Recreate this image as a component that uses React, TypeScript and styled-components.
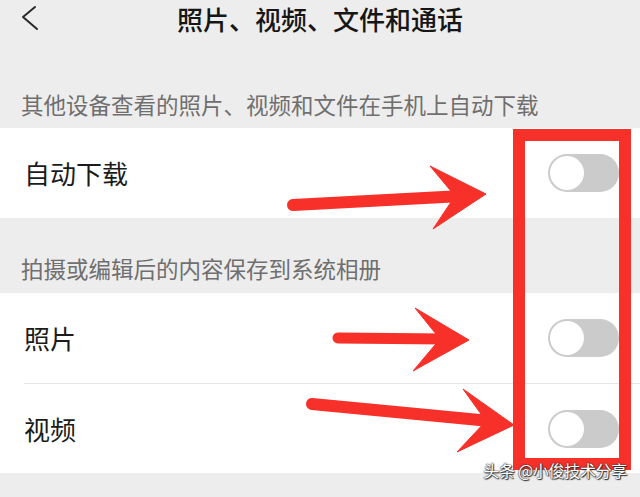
import React from "react";
import styled, { createGlobalStyle } from "styled-components";

const GlobalStyle = createGlobalStyle`
  html, body {
    margin: 0;
    padding: 0;
    background: #ededed;
  }
  body {
    font-family: "Noto Sans CJK SC", "Noto Sans", sans-serif;
  }
`;

const Page = styled.div`
  position: relative;
  width: 640px;
  height: 497px;
  overflow: hidden;
  background: #ededed;
  display: flex;
  flex-direction: column;
`;

const NavBar = styled.div`
  height: 45px;
  display: grid;
  grid-template-columns: 60px 1fr 60px;
  align-items: center;
`;

const BackButton = styled.div`
  display: flex;
  align-items: flex-start;
  padding: 5px 0 0 20px;
  height: 45px;
  box-sizing: border-box;
`;

const Title = styled.h1`
  margin: 0;
  text-align: center;
  font-size: 26px;
  line-height: 1;
  font-weight: 500;
  color: #161616;
  margin-top: -7px;
`;

const SectionLabel = styled.div<{ $height: number; $bottom: number }>`
  height: ${(p) => p.$height}px;
  box-sizing: border-box;
  display: flex;
  align-items: flex-end;
  padding: 0 21px ${(p) => p.$bottom}px;
  font-size: 22.5px;
  line-height: 1;
  color: #6f6f6f;
`;

const Group = styled.div`
  background: #ffffff;
  display: flex;
  flex-direction: column;
`;

const Row = styled.div<{ $divider?: boolean }>`
  height: 90px;
  box-sizing: border-box;
  display: flex;
  align-items: center;
  justify-content: space-between;
  padding: 0 21px 0 24px;
  border-top: ${(p) => (p.$divider ? "1px solid #e6e6e6" : "none")};
  margin-left: ${(p) => (p.$divider ? "24px" : "0")};
  padding-left: ${(p) => (p.$divider ? "0" : "24px")};
`;

const RowLabel = styled.span`
  font-size: 26px;
  line-height: 1;
  color: #1b1b1b;
`;

const Toggle = styled.div`
  width: 71px;
  height: 38px;
  box-sizing: border-box;
  border-radius: 19px;
  background: #cbcbcb;
  padding: 2px;
  display: flex;
  align-items: center;
`;

const Knob = styled.div`
  width: 34px;
  height: 34px;
  border-radius: 50%;
  background: #ffffff;
`;

const Filler = styled.div`
  flex: 1;
`;

const Overlay = styled.svg`
  position: absolute;
  left: 0;
  top: 0;
  width: 640px;
  height: 497px;
  pointer-events: none;
`;

const Watermark = styled.div`
  position: absolute;
  right: 13px;
  top: 462px;
  font-size: 16px;
  line-height: 1;
  color: #ffffff;
  letter-spacing: -0.3px;
  text-shadow: 0 0 1px #222, 0 0 2px #333, 1px 1px 1px #333;
`;

type Arrow = {
  shaft: [number, number, number, number];
  width: number;
  head: [number, number][];
};

const RED = "#f8302a";

const arrows: Arrow[] = [
  {
    shaft: [293, 205, 462, 196],
    width: 12,
    head: [
      [486, 194],
      [430, 166],
      [455, 196],
      [433, 229],
    ],
  },
  {
    shaft: [338, 338, 445, 339],
    width: 11,
    head: [
      [469, 340],
      [415, 308],
      [440, 339],
      [413, 371],
    ],
  },
  {
    shaft: [312, 404, 490, 421],
    width: 12,
    head: [
      [514, 425],
      [463, 389],
      [486, 421],
      [457, 452],
    ],
  },
];

const Switch = () => (
  <Toggle>
    <Knob />
  </Toggle>
);

export default function App() {
  return (
    <>
      <GlobalStyle />
      <Page>
        <NavBar>
          <BackButton>
            <svg width="20" height="28" viewBox="0 0 20 28">
              <polyline
                points="15,2 3,12 17,24"
                fill="none"
                stroke="#2a2a2a"
                strokeWidth="2"
                strokeLinecap="round"
                strokeLinejoin="round"
              />
            </svg>
          </BackButton>
          <Title>照片、视频、文件和通话</Title>
          <div />
        </NavBar>
        <SectionLabel $height={83} $bottom={13}>
          其他设备查看的照片、视频和文件在手机上自动下载
        </SectionLabel>
        <Group>
          <Row>
            <RowLabel>自动下载</RowLabel>
            <Switch />
          </Row>
        </Group>
        <SectionLabel $height={75} $bottom={14}>
          拍摄或编辑后的内容保存到系统相册
        </SectionLabel>
        <Group>
          <Row>
            <RowLabel>照片</RowLabel>
            <Switch />
          </Row>
          <Row $divider>
            <RowLabel>视频</RowLabel>
            <Switch />
          </Row>
        </Group>
        <Filler />
        <Overlay viewBox="0 0 640 497">
          <rect
            x="519"
            y="135"
            width="106"
            height="329"
            fill="none"
            stroke={RED}
            strokeWidth="12"
          />
          {arrows.map((a, i) => (
            <g key={i} fill={RED} stroke={RED}>
              <line
                x1={a.shaft[0]}
                y1={a.shaft[1]}
                x2={a.shaft[2]}
                y2={a.shaft[3]}
                strokeWidth={a.width}
                strokeLinecap="round"
              />
              <polygon
                points={a.head.map((p) => p.join(",")).join(" ")}
                strokeWidth="1"
                strokeLinejoin="miter"
              />
            </g>
          ))}
        </Overlay>
        <Watermark>头条 @小俊技术分享</Watermark>
      </Page>
    </>
  );
}
